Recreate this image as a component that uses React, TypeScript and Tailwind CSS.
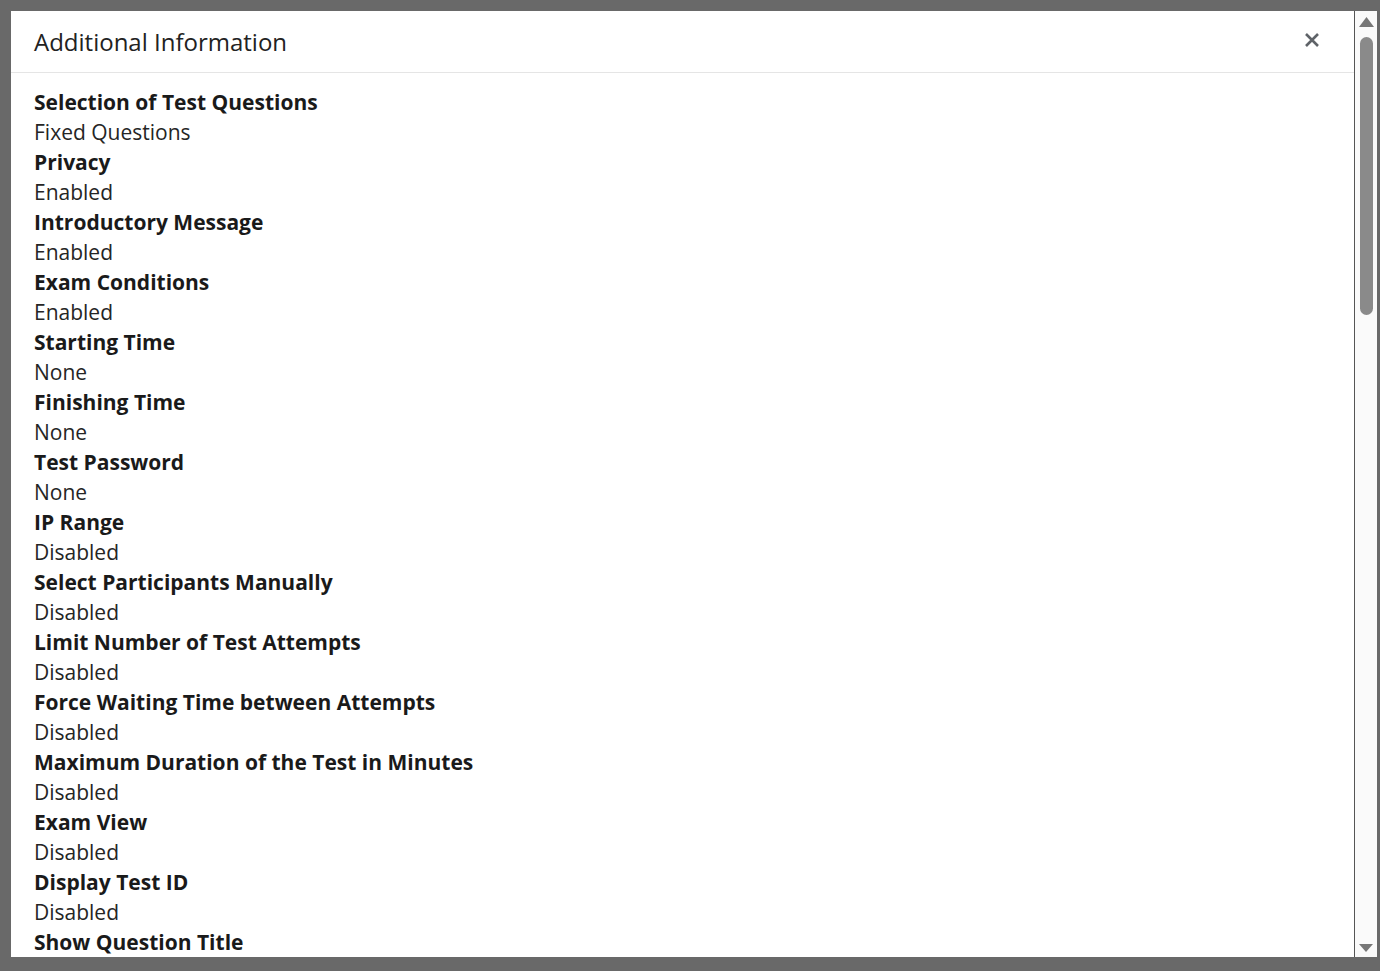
const rows: [string, string | null][] = [
  ['Selection of Test Questions', 'Fixed Questions'],
  ['Privacy', 'Enabled'],
  ['Introductory Message', 'Enabled'],
  ['Exam Conditions', 'Enabled'],
  ['Starting Time', 'None'],
  ['Finishing Time', 'None'],
  ['Test Password', 'None'],
  ['IP Range', 'Disabled'],
  ['Select Participants Manually', 'Disabled'],
  ['Limit Number of Test Attempts', 'Disabled'],
  ['Force Waiting Time between Attempts', 'Disabled'],
  ['Maximum Duration of the Test in Minutes', 'Disabled'],
  ['Exam View', 'Disabled'],
  ['Display Test ID', 'Disabled'],
  ['Show Question Title', null],
];

function Scrollbar() {
  return (
    <div className="w-[23px] shrink-0 bg-[#fafafa] border-l border-[#555] flex flex-col items-center">
      <svg width="15" height="10" viewBox="0 0 15 10" className="mt-[6px]">
        <path d="M7.5 0L15 10H0Z" fill="#777" />
      </svg>
      <div className="mt-[10px] w-[13px] h-[278px] rounded-full bg-[#8a8a8a]" />
      <div className="flex-1" />
      <svg width="14" height="8" viewBox="0 0 14 8" className="mb-[5px]">
        <path d="M0 0H14L7 8Z" fill="#777" />
      </svg>
    </div>
  );
}

export default function App() {
  return (
    <div
      className="h-[971px] w-full bg-[#696969] pt-[11px] pb-[14px] pl-[11px] pr-[3px] flex"
      style={{ fontFamily: '"Open Sans", "Noto Sans", sans-serif' }}
    >
      <div className="flex-1 flex bg-white overflow-hidden">
        <div className="flex-1 flex flex-col min-w-0">
          <div className="h-[62px] shrink-0 flex items-center justify-between pl-[23px] pr-[34px] border-b border-[#e5e5e5]">
            <h2 className="text-[24px] text-[#222] font-normal leading-none">Additional Information</h2>
            <svg width="16" height="16" viewBox="0 0 16 16" className="mt-[-4px]">
              <path d="M2 2L14 14M14 2L2 14" stroke="#5f6368" strokeWidth="2.6" strokeLinecap="butt" />
            </svg>
          </div>
          <div className="flex-1 overflow-hidden pt-[14px] pl-[23px]">
            {rows.map(([label, value]) => (
              <div key={label} className="text-[21px] leading-[30px]">
                <div className="font-bold text-[#1a1a1a]">{label}</div>
                {value && <div className="text-[#252525]">{value}</div>}
              </div>
            ))}
          </div>
        </div>
        <Scrollbar />
      </div>
    </div>
  );
}
